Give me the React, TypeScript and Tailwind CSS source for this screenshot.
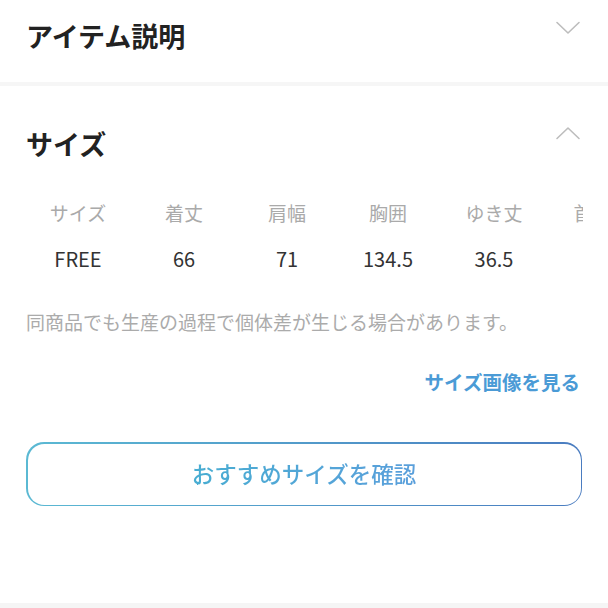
const FONT = { fontFamily: '"Noto Sans CJK JP", "Noto Sans", sans-serif' }

const COLUMNS = [
  { label: 'サイズ', value: 'FREE', width: 'w-[104px]' },
  { label: '着丈', value: '66', width: 'w-[108px]' },
  { label: '肩幅', value: '71', width: 'w-[98px]' },
  { label: '胸囲', value: '134.5', width: 'w-[104px]' },
  { label: 'ゆき丈', value: '36.5', width: 'w-[108px]' },
  { label: '首回り', value: '-', width: 'w-[108px]' },
]

function Chevron({ up }: { up?: boolean }) {
  return (
    <svg width="26" height="14" viewBox="0 0 26 14" fill="none" className="shrink-0">
      <path
        d={up ? 'M2 12.5 L13 2 L24 12.5' : 'M2 1.5 L13 12 L24 1.5'}
        stroke="#bdbdbd"
        strokeWidth="1.6"
        strokeLinecap="round"
        strokeLinejoin="round"
      />
    </svg>
  )
}

export default function App() {
  return (
    <div className="w-[608px] h-[608px] bg-white overflow-hidden flex flex-col" style={FONT}>
      {/* アイテム説明 */}
      <div className="h-[82px] flex items-start justify-between pl-[26px] pr-[27px]">
        <h2 className="mt-[18px] text-[27px] leading-[36px] font-bold text-[#222]">アイテム説明</h2>
        <div className="mt-[21px]">
          <Chevron />
        </div>
      </div>

      <div className="h-[4px] bg-[#f6f6f6]" />

      {/* サイズ */}
      <div className="flex-1 flex flex-col">
        <div className="mt-[40px] h-[36px] flex items-start justify-between pl-[26px] pr-[27px]">
          <h2 className="text-[27px] leading-[36px] font-bold text-[#222]">サイズ</h2>
          <div className="mt-[0px]">
            <Chevron up />
          </div>
        </div>

        <div className="mt-[29px] ml-[26px] mr-[25px] overflow-hidden">
          <div className="flex w-max">
            {COLUMNS.map(col => (
              <div key={col.label} className={`${col.width} shrink-0 flex flex-col items-center`}>
                <span className="h-[45px] flex items-center text-[19px] text-[#aaaaaa] whitespace-nowrap">{col.label}</span>
                <span className="h-[45px] flex items-center text-[20px] text-[#333]">{col.value}</span>
              </div>
            ))}
          </div>
        </div>

        <p className="mt-[26px] px-[26px] h-[30px] flex items-center text-[19px] text-[#ababab] whitespace-nowrap">
          同商品でも生産の過程で個体差が生じる場合があります。
        </p>

        <div className="mt-[30px] h-[30px] flex items-center justify-end pr-[28px]">
          <span className="text-[19.5px] font-bold text-[#4b9bd6]">サイズ画像を見る</span>
        </div>

        <div className="mt-[45px] mx-[26px] rounded-[18px] p-[1.5px] bg-gradient-to-r from-[#5bb9d3] to-[#4a7cc0]">
          <div className="h-[61px] rounded-[16.5px] bg-white flex items-center justify-center">
            <span className="text-[22.5px] font-medium bg-gradient-to-r from-[#48add2] to-[#5a9fdb] bg-clip-text text-transparent">
              おすすめサイズを確認
            </span>
          </div>
        </div>
      </div>

      <div className="h-[5px] bg-[#f5f5f5]" />
    </div>
  )
}
